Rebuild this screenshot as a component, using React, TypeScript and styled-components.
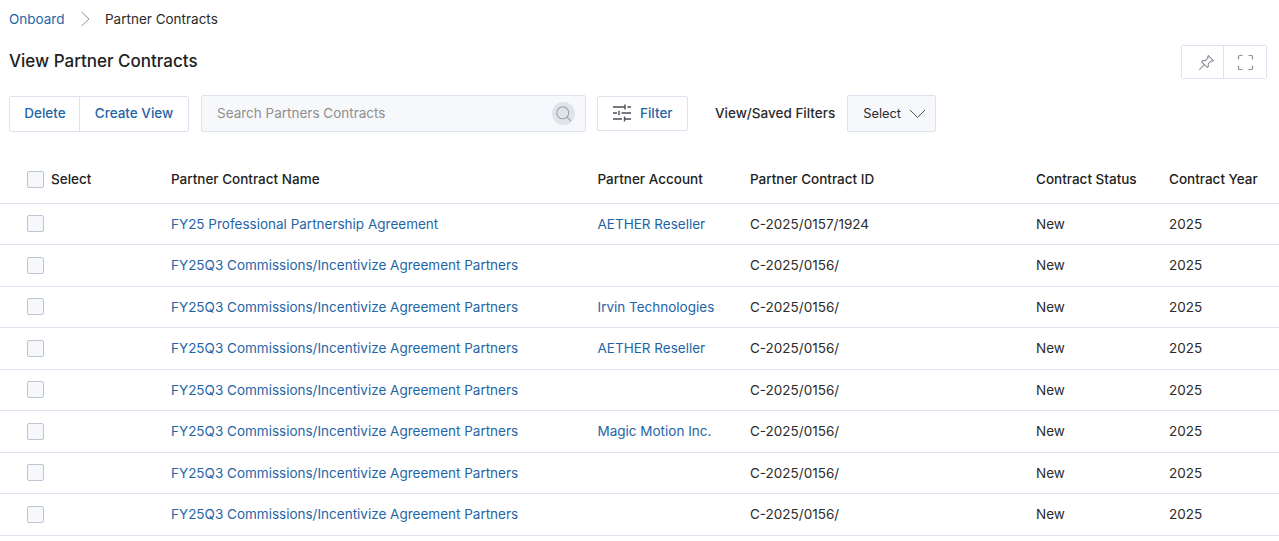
import styled, { createGlobalStyle } from 'styled-components'

const GlobalStyle = createGlobalStyle`
  html, body {
    margin: 0;
    padding: 0;
    background: #fff;
    overflow: hidden;
  }
  body {
    font-family: Inter, "Liberation Sans", sans-serif;
    font-size: 13.5px;
    color: #2b2b2b;
  }
  * {
    box-sizing: border-box;
  }
`

const BORDER = '#dde3ee'
const LINK = '#1f65a6'

const Page = styled.div`
  width: 1279px;
  height: 541px;
  overflow: hidden;
`

const Head = styled.div`
  padding: 0 12px 0 9px;
`

const Breadcrumb = styled.nav`
  display: flex;
  align-items: center;
  height: 37px;
  font-size: 13.5px;
`

const Crumb = styled.a`
  color: ${LINK};
`

const CrumbSep = styled.svg`
  width: 11px;
  height: 16px;
  margin: 0 14.5px 0 15px;
  fill: none;
  stroke: #8d929a;
  stroke-width: 1;
`

const TitleRow = styled.div`
  display: flex;
  align-items: center;
  justify-content: space-between;
  height: 34px;
  margin-top: 6px;
`

const Title = styled.h1`
  margin: 1px 0 0;
  font-size: 17px;
  font-weight: 500;
  color: #222;
`

const IconGroup = styled.div`
  display: flex;
  width: 86px;
  height: 34px;
  margin-top: 4px;
  border: 1px solid ${BORDER};
  border-radius: 2px;
`

const IconButton = styled.button<{ $divided?: boolean }>`
  flex: 0 0 ${({ $divided }) => ($divided ? '43px' : '41px')};
  display: flex;
  align-items: center;
  justify-content: center;
  padding: ${({ $divided }) => ($divided ? '0' : '0 0 0 7px')};
  background: #fff;
  border: 0;
  border-left: ${({ $divided }) => ($divided ? `1px solid ${BORDER}` : '0')};
  color: #8a8f96;
`

const Toolbar = styled.div`
  display: flex;
  align-items: center;
  height: 37px;
  margin-top: 18px;
`

const ButtonGroup = styled.div`
  display: flex;
  height: 36px;
  border: 1px solid ${BORDER};
  border-radius: 2px;
`

const GroupButton = styled.button<{ $width: number; $divided?: boolean }>`
  width: ${({ $width }) => $width}px;
  padding: 0 0 1px ${({ $divided }) => ($divided ? '0' : '1px')};
  background: #fff;
  border: 0;
  border-left: ${({ $divided }) => ($divided ? `1px solid ${BORDER}` : '0')};
  color: ${LINK};
  font: 500 13.5px Inter, sans-serif;
`

const Search = styled.div`
  display: flex;
  align-items: center;
  justify-content: space-between;
  width: 385px;
  height: 37px;
  margin-left: 12px;
  padding: 0 10px 0 15px;
  background: #f7f8fb;
  border: 1px solid ${BORDER};
  border-radius: 2px;
`

const SearchInput = styled.input`
  flex: 1;
  margin-bottom: 1px;
  border: 0;
  outline: 0;
  padding: 0;
  background: transparent;
  font: 400 13.5px Inter, sans-serif;
  color: #2b2b2b;

  &::placeholder {
    color: #8f8f8f;
    opacity: 1;
  }
`

const SearchIcon = styled.span`
  display: flex;
  align-items: center;
  justify-content: center;
  width: 23px;
  height: 23px;
  border-radius: 50%;
  background: #dfe3ea;
  color: #9a9fa6;
`

const FilterButton = styled.button`
  display: flex;
  align-items: center;
  gap: 8px;
  width: 91px;
  height: 35px;
  margin-left: 11px;
  padding: 0 0 1px 14px;
  background: #fff;
  border: 1px solid ${BORDER};
  border-radius: 2px;
  color: ${LINK};
  font: 500 13.5px Inter, sans-serif;
`

const FilterLabel = styled.span`
  margin: 0 0 1px 27px;
  font-weight: 500;
  font-size: 13.5px;
  color: #2b2b2b;
`

const SelectBox = styled.div`
  display: flex;
  align-items: center;
  justify-content: space-between;
  width: 89px;
  height: 37px;
  margin-left: 12px;
  padding: 0 9px 0 15px;
  background: #f7f8fb;
  border: 1px solid ${BORDER};
  border-radius: 2px;
  font-size: 12.8px;
`

const Table = styled.div`
  margin-top: 21.5px;
`

const Row = styled.div<{ $header?: boolean }>`
  display: grid;
  grid-template-columns: 171px 426.5px 152.5px 286px 133px 1fr;
  align-items: center;
  height: ${({ $header }) => ($header ? '50px' : '41.5px')};
  padding-top: ${({ $header }) => ($header ? '2px' : '0')};
  border-bottom: 1px solid ${BORDER};
  font-weight: ${({ $header }) => ($header ? 500 : 400)};
  font-size: 13.5px;
  color: ${({ $header }) => ($header ? '#222' : '#2b2b2b')};
`

const SelectCell = styled.label`
  display: flex;
  align-items: center;
  gap: 7px;
  padding-left: 27px;
`

const Check = styled.span`
  display: block;
  width: 17px;
  height: 17px;
  background: #f7f8fb;
  border: 1px solid #bcc5d3;
  border-radius: 2px;
`

const RowLink = styled.a`
  color: ${LINK};
`

function PinIcon() {
  return (
    <svg width="17" height="17" viewBox="0 0 17 17" fill="none" stroke="currentColor" strokeWidth="1.1" strokeLinejoin="round" strokeLinecap="round">
      <path d="M10.4 1.6 15.4 6.6 14.4 7.3 13.2 6.9 10.2 9.9 10.4 12.4 9.2 13.3 3.7 7.8 4.6 6.6 7.1 6.8 10.1 3.8 9.7 2.6Z" />
      <path d="M6.4 10.6 1.6 15.4" />
    </svg>
  )
}

function ExpandIcon() {
  return (
    <svg width="17" height="17" viewBox="0 0 17 17" fill="none" stroke="currentColor" strokeWidth="1.2" strokeLinecap="round">
      <path d="M1.5 5V2.8C1.5 2 2 1.5 2.8 1.5H5" />
      <path d="M12 1.5H14.2C15 1.5 15.5 2 15.5 2.8V5" />
      <path d="M15.5 12V14.2C15.5 15 15 15.5 14.2 15.5H12" />
      <path d="M5 15.5H2.8C2 15.5 1.5 15 1.5 14.2V12" />
    </svg>
  )
}

function MagnifierIcon() {
  return (
    <svg width="17" height="17" viewBox="0 0 17 17" fill="none" stroke="currentColor" strokeWidth="1.1" strokeLinecap="round">
      <circle cx="7.8" cy="7.8" r="6" />
      <path d="M12.2 12.2 15.6 15.6" />
    </svg>
  )
}

function SlidersIcon() {
  return (
    <svg width="20" height="20" viewBox="0 0 20 20" fill="none" stroke="#4a4f57" strokeWidth="1.4">
      <path d="M1 4H13M13 1.5V6.5M15.5 4H19" />
      <path d="M1 10H5M7 7.8V12.2M9.5 10H19" />
      <path d="M1 16H10M12.5 13.5V18.5M12.5 16H19" />
    </svg>
  )
}

type Contract = {
  name: string
  account?: string
  id: string
}

const MAIN_NAME = 'FY25Q3 Commissions/Incentivize Agreement Partners'

const contracts: Contract[] = [
  { name: 'FY25 Professional Partnership Agreement', account: 'AETHER Reseller', id: 'C-2025/0157/1924' },
  { name: MAIN_NAME, id: 'C-2025/0156/' },
  { name: MAIN_NAME, account: 'Irvin Technologies', id: 'C-2025/0156/' },
  { name: MAIN_NAME, account: 'AETHER Reseller', id: 'C-2025/0156/' },
  { name: MAIN_NAME, id: 'C-2025/0156/' },
  { name: MAIN_NAME, account: 'Magic Motion Inc.', id: 'C-2025/0156/' },
  { name: MAIN_NAME, id: 'C-2025/0156/' },
  { name: MAIN_NAME, id: 'C-2025/0156/' },
]

export default function App() {
  return (
    <Page>
      <GlobalStyle />
      <Head>
        <Breadcrumb>
          <Crumb>Onboard</Crumb>
          <CrumbSep viewBox="0 0 11 16">
            <path d="M1.5 1 9 8 1.5 15" />
          </CrumbSep>
          <span>Partner Contracts</span>
        </Breadcrumb>
        <TitleRow>
          <Title>View Partner Contracts</Title>
          <IconGroup>
            <IconButton>
              <PinIcon />
            </IconButton>
            <IconButton $divided>
              <ExpandIcon />
            </IconButton>
          </IconGroup>
        </TitleRow>
        <Toolbar>
          <ButtonGroup>
            <GroupButton $width={69}>Delete</GroupButton>
            <GroupButton $width={109} $divided>
              Create View
            </GroupButton>
          </ButtonGroup>
          <Search>
            <SearchInput placeholder="Search Partners Contracts" />
            <SearchIcon>
              <MagnifierIcon />
            </SearchIcon>
          </Search>
          <FilterButton>
            <SlidersIcon />
            Filter
          </FilterButton>
          <FilterLabel>View/Saved Filters</FilterLabel>
          <SelectBox>
            Select
            <svg width="17" height="10" viewBox="0 0 17 10" fill="none" stroke="#555" strokeWidth="1">
              <path d="M1 1 8.5 8.5 16 1" />
            </svg>
          </SelectBox>
        </Toolbar>
      </Head>
      <Table>
        <Row $header>
          <SelectCell>
            <Check />
            Select
          </SelectCell>
          <span>Partner Contract Name</span>
          <span>Partner Account</span>
          <span>Partner Contract ID</span>
          <span>Contract Status</span>
          <span>Contract Year</span>
        </Row>
        {contracts.map((contract, index) => (
          <Row key={index}>
            <SelectCell>
              <Check />
            </SelectCell>
            <RowLink>{contract.name}</RowLink>
            <RowLink>{contract.account}</RowLink>
            <span>{contract.id}</span>
            <span>New</span>
            <span>2025</span>
          </Row>
        ))}
      </Table>
    </Page>
  )
}
